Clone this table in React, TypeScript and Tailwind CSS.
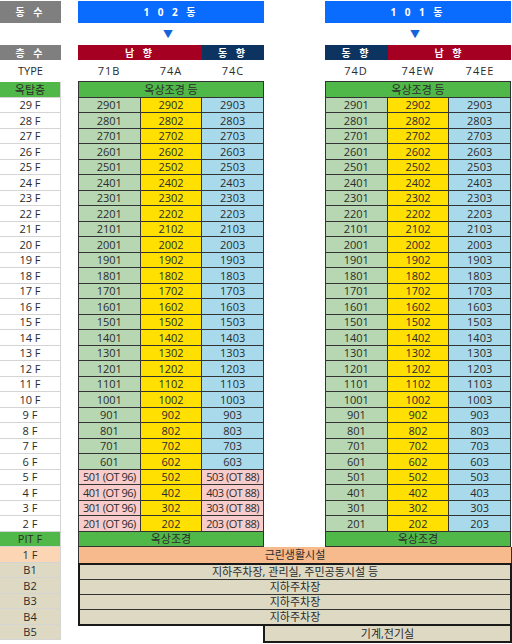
const floors = Array.from({ length: 28 }, (_, i) => 29 - i);

const cellBase = "flex items-center justify-center leading-none text-[11px] text-[#2b2b2b]";

function Tower({ pink }: { pink: boolean }) {
  return (
    <div className="grid w-[186px] grid-cols-3 auto-rows-[14.5px] gap-px bg-[#333] p-px">
      <div className={`${cellBase} col-span-3 bg-[#50b848] text-[10px]`}>옥상조경 등</div>
      {floors.map((f) => {
        const ot = pink && f <= 5;
        return [
          <div key={`${f}a`} className={`${cellBase} ${ot ? "bg-[#f9cccc] tracking-[-0.5px]" : "bg-[#b7d7b2]"}`}>
            {ot ? `${f}01 (OT 96)` : `${f}01`}
          </div>,
          <div key={`${f}b`} className={`${cellBase} bg-[#ffe000]`}>
            {`${f}02`}
          </div>,
          <div key={`${f}c`} className={`${cellBase} ${ot ? "bg-[#f9cccc] tracking-[-0.5px]" : "bg-[#a8daec]"}`}>
            {ot ? `${f}03 (OT 88)` : `${f}03`}
          </div>,
        ];
      })}
      <div className={`${cellBase} col-span-3 bg-[#50b848] text-[10px]`}>옥상조경</div>
    </div>
  );
}

function SideCell({ label, tone }: { label: string; tone: string }) {
  return (
    <div
      className={`flex h-[15.5px] items-center justify-center border-b border-r border-[#d4d4d4] text-[11px] leading-none text-[#2b2b2b] ${tone}`}
    >
      {label}
    </div>
  );
}

function Label({ text, tone, width }: { text: string; tone: string; width: string }) {
  return (
    <div
      className={`flex h-full items-center justify-center text-[10px] font-bold leading-none tracking-[3px] text-white ${tone} ${width}`}
    >
      {text}
    </div>
  );
}

export default function App() {
  return (
    <div className="w-[512px] bg-white pt-px font-['Open_Sans','Noto_Sans_CJK_KR',sans-serif]">
      {/* 동수 */}
      <div className="flex h-[22px]">
        <Label text="동 수" tone="bg-[#7f7f7f]" width="w-[61px]" />
        <div className="ml-[17px] flex">
          <Label text="1 0 2  동" tone="bg-[#0a6cff]" width="w-[186px]" />
        </div>
        <div className="ml-[61px] flex">
          <Label text="1 0 1  동" tone="bg-[#0a6cff]" width="w-[186px]" />
        </div>
      </div>

      <div className="flex h-[22px] items-center text-[10px] leading-none text-[#1565d8]">
        <div className="ml-[78px] flex w-[186px] justify-center pr-[6px]">▼</div>
        <div className="ml-[61px] flex w-[186px] justify-center pr-[6px]">▼</div>
      </div>

      {/* 층수 */}
      <div className="flex h-[15px]">
        <Label text="층 수" tone="bg-[#7f7f7f]" width="w-[61px]" />
        <div className="ml-[17px] flex">
          <Label text="남 향" tone="bg-[#a50021]" width="w-[124px]" />
          <Label text="동 향" tone="bg-[#0d3461]" width="w-[62px]" />
        </div>
        <div className="ml-[61px] flex">
          <Label text="동 향" tone="bg-[#0d3461]" width="w-[63px]" />
          <Label text="남 향" tone="bg-[#a50021]" width="w-[123px]" />
        </div>
      </div>

      {/* TYPE */}
      <div className="flex h-[21px] items-center text-[11px] leading-none tracking-[1px] text-[#2b2b2b]">
        <div className="w-[61px] text-center tracking-normal">TYPE</div>
        <div className="ml-[17px] grid w-[186px] grid-cols-3 text-center">
          <span>71B</span>
          <span>74A</span>
          <span>74C</span>
        </div>
        <div className="ml-[61px] grid w-[186px] grid-cols-3 text-center">
          <span>74D</span>
          <span>74EW</span>
          <span>74EE</span>
        </div>
      </div>

      {/* body */}
      <div className="flex">
        <div className="w-[61px] pt-px">
          <SideCell label="옥탑층" tone="bg-[#50b848]" />
          {floors.map((f) => (
            <SideCell key={f} label={`${f} F`} tone="bg-white" />
          ))}
          <SideCell label="PIT F" tone="bg-[#50b848]" />
          <SideCell label="1 F" tone="bg-[#fcd5b4]" />
          {["B1", "B2", "B3", "B4", "B5"].map((b) => (
            <SideCell key={b} label={b} tone="bg-[#ddd9c3]" />
          ))}
        </div>

        <div className="ml-[17px] flex w-[434px] flex-col">
          <div className="flex">
            <Tower pink />
            <div className="w-[61px]" />
            <Tower pink={false} />
          </div>

          <div className={`${cellBase} h-[15.5px] border-x border-[#333] bg-[#f6ba8c] text-[10px]`}>
            근린생활시설
          </div>

          <div className="flex flex-col border-2 border-[#1a1a1a] bg-[#ddd9c3]">
            <div className={`${cellBase} h-[14px] text-[10px]`}>지하주차장, 관리실, 주민공동시설 등</div>
            <div className={`${cellBase} h-[15px] border-t border-[#333] text-[10px]`}>지하주차장</div>
            <div className={`${cellBase} h-[15px] border-t border-[#333] text-[10px]`}>지하주차장</div>
            <div className={`${cellBase} h-[15px] border-t border-[#333] text-[10px]`}>지하주차장</div>
          </div>
          <div
            className={`${cellBase} ml-[185px] h-[17px] w-[249px] border-2 border-t-0 border-[#1a1a1a] bg-[#ddd9c3] text-[10px]`}
          >
            기계,전기실
          </div>
        </div>
      </div>
    </div>
  );
}
